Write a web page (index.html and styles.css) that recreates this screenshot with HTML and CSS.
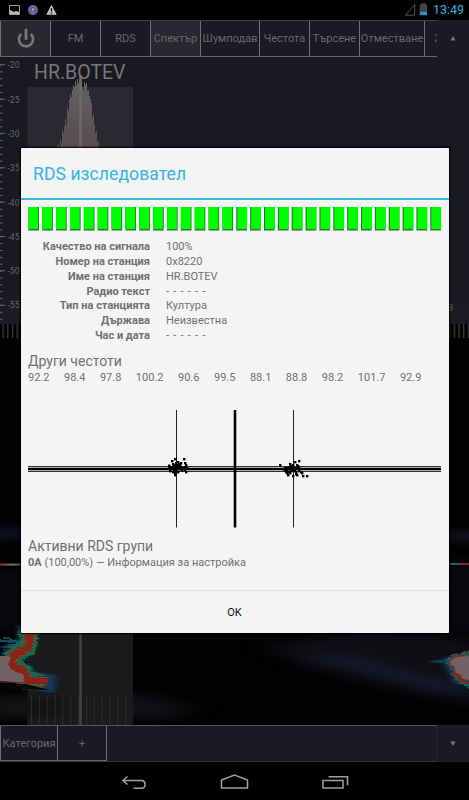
FILE: index.html
```html
<!DOCTYPE html>
<html lang="bg">
<head>
    <meta charset="UTF-8">
    <meta name="viewport" content="width=device-width, initial-scale=1.0">
    <title>RDS изследовател</title>
    <link rel="stylesheet" href="styles.css">
</head>
<body>

<header class="status-bar">
    <svg class="notifications" width="70" height="20" viewBox="0 0 70 20">
        <path d="M9.5 5.5h10v9h-10z" fill="none" stroke="#999" stroke-width="1"/>
        <path d="M10 14v-4l2 1 2 1 2-1 3 1v2z" fill="#bbb"/>
        <circle cx="33" cy="10" r="5.200" fill="#57548a"/>
        <circle cx="33" cy="9.500" r="3.300" fill="none" stroke="#8583a9" stroke-width=".8"/>
        <circle cx="33" cy="9.500" r="1.300" fill="#aaa"/>
        <path d="M33 10v5" stroke="#8583a9"/>
        <path d="M51.500 4.800l5.300 9.900h-10.600z" fill="#c0c0c0"/>
        <path d="M51.500 8.200v3.300M51.500 12.500v1.300" stroke="#000" stroke-width="1.300"/>
    </svg>
    <svg class="signal" width="26" height="20" viewBox="404 0 26 20">
        <path d="M405.500 15.200L414.700 4.500v10.700z" fill="none" stroke="#555"/>
        <path d="M421.500 3.200h4v1.300h1.500v7h-7.200v-7h1.700z" fill="#444"/>
        <path d="M419.800 11.500h7.200v3.700h-7.200z" fill="#2f93bb"/>
    </svg>
    <span class="clock">13:49</span>
</header>

<nav class="toolbar">
    <div class="buttons">
        <div class="tool power active">
            <svg width="20" height="22" viewBox="0 0 20 22">
                <path d="M5.200 6a7.100 7.100 0 1 0 9.600 0" fill="none" stroke="#77777a" stroke-width="2.600"/>
                <path d="M10 1.800v9" stroke="#77777a" stroke-width="2.800" stroke-linecap="round"/>
            </svg>
        </div>
        <div class="tool">FM</div>
        <div class="tool">RDS</div>
        <div class="tool active">Спектър</div>
        <div class="tool wide">Шумподав</div>
        <div class="tool">Честота</div>
        <div class="tool">Търсене</div>
        <div class="tool wider">Отместване</div>
        <div class="tool cut">З</div>
    </div>
    <div class="toggle"><svg width="6" height="5"><path d="M3 0l2.500 4.500h-5z" fill="#77777a"/></svg></div>
</nav>

<main class="stage">
    <svg class="plot" width="469" height="668" viewBox="0 57 469 668">
        <defs>
            <linearGradient id="peak" x1="0" y1="0" x2="0" y2="1">
                <stop offset="0" stop-color="#656365"/>
                <stop offset=".6" stop-color="#5a5254"/>
                <stop offset="1" stop-color="#5a474b"/>
            </linearGradient>
            <linearGradient id="trace" x1="0" x2="1">
                <stop offset="0" stop-color="#8a2a1c"/>
                <stop offset=".5" stop-color="#6b7060"/>
                <stop offset="1" stop-color="#145a70"/>
            </linearGradient>
            <pattern id="minor" width="8" height="6.870" patternUnits="userSpaceOnUse" y="64.500">
                <path d="M0 .5h2.500" stroke="#66666a" stroke-width="1"/>
            </pattern>
            <pattern id="major" width="8" height="34.350" patternUnits="userSpaceOnUse" y="64.200">
                <path d="M0 .5h5" stroke="#66666a" stroke-width="1"/>
            </pattern>
            <pattern id="comb" width="4.700" height="20" x="2.500" patternUnits="userSpaceOnUse">
                <path d="M.7 0v20" stroke="#4c4c4c" stroke-width="1"/>
            </pattern>
            <pattern id="grid" width="7.850" height="40" x="31" patternUnits="userSpaceOnUse">
                <path d="M.5 0v40" stroke="#2c2a2c" stroke-width="1"/>
            </pattern>
            <filter id="soft" filterUnits="userSpaceOnUse" x="-60" y="500" width="600" height="240" color-interpolation-filters="sRGB"><feGaussianBlur stdDeviation="16 4"/></filter>
            <filter id="ragged" filterUnits="userSpaceOnUse" x="-30" y="600" width="530" height="130" color-interpolation-filters="sRGB">
                <feTurbulence type="fractalNoise" baseFrequency=".08 .45" numOctaves="2" seed="4" result="noise"/>
                <feDisplacementMap in="SourceGraphic" in2="noise" scale="11" xChannelSelector="R" yChannelSelector="A"/>
            </filter>
            <filter id="glow" filterUnits="userSpaceOnUse" x="-30" y="600" width="530" height="130" color-interpolation-filters="sRGB"><feGaussianBlur stdDeviation="3 .7"/></filter>
        </defs>

        <!-- spectrum -->
        <rect y="57" width="469" height="267" fill="#191922"/>
        <path d="M0 300l4-3 3 5 4-8 4 6 5-5v29h-20zM448 305l3-8 2 6 3-9 3 8 4-6 6 5v23h-21z" fill="#1d1a25"/>
        <rect x="27.500" y="87" width="105.500" height="237" fill="#2a2830"/>
        <path d="M57 150v-5h2v4h1v-9h1v3h1v-13h1v3h1v-7h1v-7h1v5h1v-16h1v3h1v-11h1v-6h1v3h1v-7h1v-5h1v2h1v-6h1v4h1v-6h1v4h1v-3h1v5h1v-6h1v8h1v3h1v-8h1v3h1v-2h1v8h1v-1h1v6h1v3h1v4h1v14h1v-3h1v11h1v8h1v-2h1v11h1v-1h1v13h1v9z" fill="url(#peak)"/>
        <path d="M80.500 75v75" stroke="#6b6a6b" stroke-width="2.500"/>
        <rect y="64" width="8" height="260" fill="url(#minor)"/>
        <rect y="64" width="8" height="260" fill="url(#major)"/>
        <g class="scale">
            <text x="7.500" y="68">-20</text>
            <text x="7.500" y="102.500">-25</text>
            <text x="7.500" y="137">-30</text>
            <text x="7.500" y="171">-35</text>
            <text x="7.500" y="205.500">-40</text>
            <text x="7.500" y="239.500">-45</text>
            <text x="7.500" y="274">-50</text>
            <text x="7.500" y="308">-55</text>
            <text x="448" y="311">8</text>
        </g>
        <text class="station" x="34" y="79">HR.BOTEV</text>

        <!-- waterfall -->
        <rect y="324" width="469" height="401" fill="#020203"/>
        <rect y="324" width="469" height="14" fill="url(#comb)"/>
        <g filter="url(#soft)">
            <path d="M-25 529h55v9h-55zM440 532h55v8h-55z" fill="#15172c"/>
            <path d="M-20 570h45v60h-45zM445 560h40v70h-40z" fill="#0b0a10"/>
            <path d="M270 645l90-14 119 8v66l-100-20-70-20z" fill="#100e14"/>
            <path d="M285 657l50 6 75 20 70 14v-8l-70-14-60-18z" fill="#181d38"/>
            <path d="M90 690l60 6 40 14-20 9h-80z" fill="#131016"/>
        </g>
        <rect y="563.500" width="22" height="2.200" fill="url(#trace)"/>
        <rect x="448" y="563" width="14" height="1.800" fill="#176a75"/>
        <rect x="459" y="563" width="10" height="2" fill="#832a1d"/>
        <rect x="27.500" y="633" width="105.500" height="92" fill="#1c1b1c"/>
        <path filter="url(#soft)" d="M-20 696h90v22h-90z" fill="#151216"/>

        <!-- strong carriers, coloured from cold to hot -->
        <g fill="none" stroke-linejoin="round">
            <g filter="url(#glow)" stroke="#113c5c">
                <path d="M28 626l-2 14-2 7-12 9-3 8 14 8 4 8 28 4" stroke-width="18"/>
                <path d="M0 641h22M0 647h20" stroke-width="2.500"/>
                <path d="M478 652l-32 9 8 13 4 7h20" stroke-width="7"/>
                <path d="M432 661.500h20" stroke-width="3"/>
            </g>
            <g filter="url(#ragged)">
                <path d="M29 626v14l-2 8-14 8-3 8 14 8 3 8 10 2" stroke="#176359" stroke-width="18"/>
                <path d="M29 626v14l-2 8-14 8-3 8 14 8 4 9 17 2" stroke="#43682a" stroke-width="12"/>
                <path d="M29 626v14l-2 8-14 8-3 8 14 8 4 9 20 2" stroke="#8b2118" stroke-width="8.500"/>
                <path d="M484 651l-30 7-5 3 6 8 4 9 8 5h20" stroke="#176359" stroke-width="7"/>
                <path d="M484 652l-30 7-4 3 6 8 4 9 8 3h20" stroke="#8b2118" stroke-width="4"/>
                <path d="M0 640h14M3 646h14" stroke="#176359" stroke-width="1.500"/>
            </g>
        </g>
        <path d="M0 656h8l3 1-1 3-2 4 3 5 5 3 7 2 1 3-1 3 2 2-1 1-12-1-12-1z" fill="#706265"/>
        <path d="M0 682l24 .5 22 1.500" fill="none" stroke="#8b2118" stroke-width="1.200"/>
        <path d="M0 684h25l25 6-50-1z" fill="#070507"/>
        <path d="M469 656l-12 1-7 4 1 4 3 1 2 7 5 2 2 4 6 1z" fill="#706265"/>
        <rect x="31" y="695" width="98" height="30" fill="url(#grid)"/>
        <path d="M80.500 633v92" stroke="#444244" stroke-width="2.500"/>
    </svg>

    <section class="dialog">
        <h1>RDS изследовател</h1>
        <div class="content">
            <svg class="quality" id="quality" width="414" height="25"></svg>
            <dl>
                <dt>Качество на сигнала</dt><dd>100%</dd>
                <dt>Номер на станция</dt><dd>0x8220</dd>
                <dt>Име на станция</dt><dd>HR.BOTEV</dd>
                <dt>Радио текст</dt><dd class="empty">- - - - - -</dd>
                <dt>Тип на станцията</dt><dd>Култура</dd>
                <dt>Държава</dt><dd>Неизвестна</dd>
                <dt>Час и дата</dt><dd class="empty">- - - - - -</dd>
            </dl>
            <h2>Други честоти</h2>
            <div class="frequencies">
                <span>92.2</span><span>98.4</span><span>97.8</span><span>100.2</span><span>90.6</span><span>99.5</span><span>88.1</span><span>88.8</span><span>98.2</span><span>101.7</span><span>92.9</span>
            </div>
            <svg class="constellation" width="413" height="118" viewBox="28 410 413 118">
                <rect x="28" y="466" width="413" height="6" fill="#aaa"/>
                <path d="M28 466.500h413M28 471.500h413" stroke="#333"/>
                <path d="M28 469h413" stroke="#000" stroke-width="2"/>
                <path d="M176.500 410v117.500M293.500 410v117.500" stroke="#222"/>
                <path d="M235 410v117.500" stroke="#000" stroke-width="2.600"/>
                <g id="samples"></g>
            </svg>
            <h2>Активни RDS групи</h2>
            <p><b>0A</b> (100,00%) — Информация за настройка</p>
        </div>
        <button>OK</button>
    </section>
</main>

<nav class="toolbar bottom">
    <div class="buttons">
        <div class="tool category">Категория</div>
        <div class="tool add">+</div>
    </div>
    <div class="toggle"><svg width="6" height="5"><path d="M3 5l2.500-4.500h-5z" fill="#77777a"/></svg></div>
</nav>

<footer class="nav-bar">
    <svg width="469" height="38" viewBox="0 762 469 38" fill="none" stroke="#a0a0a0" stroke-width="1.500">
        <path d="M127.500 776.500l-4.500 4 4.500 4M123.500 780.500h18.500a4 4 0 0 1 0 7.800h-8.500"/>
        <path d="M221.500 788v-8l13-5 13 5v8z"/>
        <path d="M323 780.500h20v7.500h-20zM328.500 776.700h19v8.500"/>
    </svg>
</footer>

<script>
    // Signal quality segments, shaded towards the middle
    var bars = "";
    for (var i = 0; i < 30; i++) {
        var x = 0.4 + i * 13.86;
        bars += `<rect x="${x}" y="0" width="10.6" height="23.5" fill="#35603a"/>`;
        bars += `<rect x="${i < 15 ? x : x + 1}" y="0" width="9.8" height="22.2" fill="#00ff00"/>`;
    }
    document.getElementById("quality").innerHTML = bars;

    // Sample points of the constellation
    var points = [
        [174, 458], [183, 458], [171, 460], [172, 463], [177, 461], [180, 462], [184, 462], [185, 464],
        [175, 462], [176, 464], [178, 463], [179, 464], [174, 464], [172, 465], [170, 466], [168, 467],
        [170, 468], [172, 467], [174, 466], [176, 467], [178, 466], [180, 466], [182, 467], [184, 466],
        [173, 469], [175, 469], [177, 468], [179, 468], [169, 470], [172, 471], [174, 472], [177, 471],
        [181, 469], [184, 469], [185, 471], [186, 467], [174, 474], [168, 464.5], [174, 470], [176, 465],
        [279, 464], [294, 461], [298, 460], [289, 463], [290, 465], [292, 464], [296, 464], [297, 465],
        [288, 466], [286, 467], [284, 467], [282, 468], [284, 469], [286, 470], [288, 468], [290, 467],
        [292, 466], [294, 467], [296, 467], [298, 467], [286, 472], [288, 471], [290, 470], [292, 469],
        [294, 470], [287, 474], [292, 475], [295, 473], [296, 474], [298, 470], [300, 471], [301, 472],
        [302, 475], [306, 475], [285, 471], [295, 471], [289, 472]
    ];
    document.getElementById("samples").innerHTML = points.map(p => `<rect x="${p[0]}" y="${p[1]}" width="2.4" height="2.4"/>`).join("");
</script>

</body>
</html>
```

FILE: styles.css
```css
body {
    font-family: Roboto, sans-serif;
    margin: 0;
    width: 469px;
    height: 800px;
    overflow: hidden;
    background-color: #000;
    display: flex;
    flex-direction: column;
}

svg {
    display: block;
}

.status-bar {
    height: 20px;
    display: flex;
    align-items: center;
    background-color: #000;
}

.signal {
    margin-left: auto;
}

.clock {
    width: 36px;
    margin-left: 3px;
    color: #33b5e5;
    font-size: 12.5px;
    line-height: 20px;
}

.toolbar {
    height: 37px;
    display: flex;
    background-color: #1b1924;
    color: #69686c;
    font-size: 11px;
}

.buttons {
    width: 437px;
    display: flex;
    overflow: hidden;
    box-sizing: border-box;
    border-top: 1px solid #3c3b40;
    border-bottom: 1px solid #69686a;
}

.tool {
    width: 50px;
    flex: none;
    box-sizing: border-box;
    border-left: 1px solid #717072;
    display: flex;
    align-items: center;
    justify-content: center;
    white-space: nowrap;
}

.active {
    background-color: #29272f;
}

.wide {
    width: 59px;
}

.wider {
    width: 65px;
}

.cut {
    justify-content: flex-start;
    padding-left: 9px;
}

.toggle {
    width: 32px;
    display: flex;
    align-items: center;
    justify-content: center;
}

.stage {
    height: 668px;
    position: relative;
}

.scale {
    font-size: 8.5px;
    fill: #66656a;
}

.station {
    font-size: 19.5px;
    fill: #77767a;
}

.dialog {
    position: absolute;
    left: 20.5px;
    top: 91px;
    width: 428px;
    height: 485px;
    display: flex;
    flex-direction: column;
    background-color: #f4f4f4;
    border-radius: 1px;
    box-shadow: 0 0 2px 1px #000;
    color: #707070;
}

h1 {
    height: 50px;
    margin: 0;
    padding-left: 12.5px;
    border-bottom: 2px solid #33b5e5;
    color: #33b5e5;
    font-size: 17.5px;
    font-weight: normal;
    line-height: 52px;
    letter-spacing: 0.1px;
}

.content {
    flex: 1;
    padding: 7px 7.5px 0;
}

dl {
    display: grid;
    grid-template-columns: 122px 1fr;
    column-gap: 16px;
    margin: 8px 0;
    font-size: 11px;
    line-height: 14.85px;
}

dt {
    text-align: right;
    font-weight: bold;
}

dd {
    margin: 0;
}

.empty {
    letter-spacing: 0.75px;
}

h2 {
    margin: 0;
    font-size: 14px;
    font-weight: normal;
    line-height: 18px;
}

.frequencies {
    display: flex;
    gap: 14.5px;
    font-size: 11px;
    line-height: 15px;
}

.constellation {
    margin: 25px 0 9px;
}

p {
    margin: 0;
    font-size: 11px;
    line-height: 15px;
}

button {
    height: 43px;
    padding: 0;
    border: none;
    border-top: 1px solid #dedede;
    background: none;
    color: #111;
    font-family: inherit;
    font-size: 11px;
}

.bottom .buttons {
    border-top-color: #555459;
    border-bottom-color: #343239;
    border-right: 1px solid #28262f;
}

.bottom .category {
    width: 57px;
    border-bottom: 1px solid #69686a;
}

.bottom .add {
    border-right: 1px solid #717072;
    border-bottom: 1px solid #69686a;
}

.nav-bar {
    height: 38px;
    background-color: #000;
}
```
